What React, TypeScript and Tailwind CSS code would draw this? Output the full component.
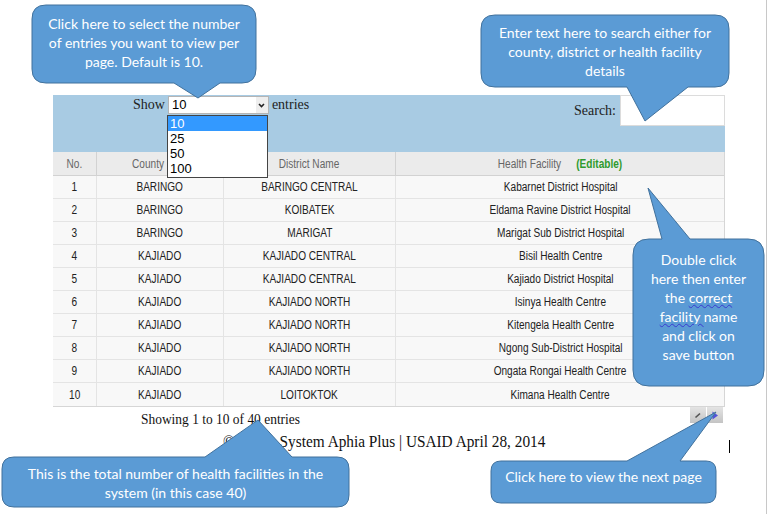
import React from "react";

type Row = { no: number; county: string; district: string; facility: string };

const rows: Row[] = [
  { no: 1, county: "BARINGO", district: "BARINGO CENTRAL", facility: "Kabarnet District Hospital" },
  { no: 2, county: "BARINGO", district: "KOIBATEK", facility: "Eldama Ravine District Hospital" },
  { no: 3, county: "BARINGO", district: "MARIGAT", facility: "Marigat Sub District Hospital" },
  { no: 4, county: "KAJIADO", district: "KAJIADO CENTRAL", facility: "Bisil Health Centre" },
  { no: 5, county: "KAJIADO", district: "KAJIADO CENTRAL", facility: "Kajiado District Hospital" },
  { no: 6, county: "KAJIADO", district: "KAJIADO NORTH", facility: "Isinya Health Centre" },
  { no: 7, county: "KAJIADO", district: "KAJIADO NORTH", facility: "Kitengela Health Centre" },
  { no: 8, county: "KAJIADO", district: "KAJIADO NORTH", facility: "Ngong Sub-District Hospital" },
  { no: 9, county: "KAJIADO", district: "KAJIADO NORTH", facility: "Ongata Rongai Health Centre" },
  { no: 10, county: "KAJIADO", district: "LOITOKTOK", facility: "Kimana Health Centre" },
];

type Side = "top" | "bottom";

// rounded box with a pointer on its top or bottom edge
function calloutPath(
  x: number,
  y: number,
  w: number,
  h: number,
  r: number,
  side: Side,
  a: number,
  b: number,
  tip: [number, number]
) {
  const R = x + w;
  const B = y + h;
  const top =
    side === "top"
      ? `L ${a} ${y} L ${tip[0]} ${tip[1]} L ${b} ${y} L ${R - r} ${y}`
      : `L ${R - r} ${y}`;
  const bottom =
    side === "bottom"
      ? `L ${b} ${B} L ${tip[0]} ${tip[1]} L ${a} ${B} L ${x + r} ${B}`
      : `L ${x + r} ${B}`;
  return `M ${x + r} ${y} ${top} Q ${R} ${y} ${R} ${y + r} L ${R} ${B - r} Q ${R} ${B} ${R - r} ${B} ${bottom} Q ${x} ${B} ${x} ${B - r} L ${x} ${y + r} Q ${x} ${y} ${x + r} ${y} Z`;
}

const callouts = [
  { box: [32, 5, 224, 78], r: 14, side: "bottom" as Side, a: 174, b: 220, tip: [198, 98] as [number, number] },
  { box: [481, 15, 248, 72], r: 14, side: "bottom" as Side, a: 627, b: 688, tip: [645, 121] as [number, number] },
  { box: [633, 239, 131, 147], r: 16, side: "top" as Side, a: 662, b: 690, tip: [648, 188] as [number, number] },
  { box: [2, 457, 347, 50], r: 12, side: "top" as Side, a: 205, b: 292, tip: [258, 420] as [number, number] },
  { box: [491, 461, 225, 42], r: 10, side: "top" as Side, a: 627, b: 680, tip: [716, 412] as [number, number] },
];

const calloutFont = { fontFamily: "Lato, 'Open Sans', sans-serif" };
const tableFont = { fontFamily: "'Liberation Sans', Arial, sans-serif" };
const serifFont = { fontFamily: "'Liberation Serif', 'Times New Roman', serif" };

function CalloutText({ box, children }: { box: number[]; children: React.ReactNode }) {
  return (
    <div
      className="absolute flex items-center justify-center text-center text-white text-[14px] leading-[19px]"
      style={{ left: box[0], top: box[1], width: box[2], height: box[3], ...calloutFont }}
    >
      <div>{children}</div>
    </div>
  );
}

// the screenshot's table text is horizontally squeezed
function Narrow({ children }: { children: React.ReactNode }) {
  return <span className="inline-block whitespace-nowrap scale-x-[0.84]">{children}</span>;
}

export default function App() {
  return (
    <div className="relative w-[767px] h-[514px] overflow-hidden bg-white border-r border-[#c8c8c8]">
      <div className="pt-[95px] pl-[53px]">
        <div className="w-[672px]">
          {/* toolbar */}
          <div className="relative flex justify-between h-[57px] bg-[#a8cbe3]">
            <div className="flex items-start gap-[3px] pl-[80px] pt-[1px] text-[14px] text-[#222]" style={serifFont}>
              <span className="leading-[18px]">Show</span>
              <div className="flex w-[101px] h-[18px] bg-white border border-[#b5b5b5]">
                <span className="flex-1 pl-[3px] text-[13px] leading-[16px] text-black" style={tableFont}>10</span>
                <span className="flex w-[12px] items-center justify-center bg-[#eeeeee]">
                  <svg width="7" height="5" viewBox="0 0 7 5">
                    <path d="M1 1 L3.5 3.5 L6 1" stroke="#222" strokeWidth="1.6" fill="none" />
                  </svg>
                </span>
              </div>
              <span className="leading-[18px]">entries</span>
            </div>
            <div className="flex items-start gap-[4px]">
              <span className="pt-[5px] text-[14px] text-[#222]" style={serifFont}>Search:</span>
              <div className="w-[105px] h-[31px] bg-white border border-[#dcdcdc]" />
            </div>
            {/* open dropdown list */}
            <div
              className="absolute left-[114px] top-[20px] w-[101px] h-[63px] bg-white border border-[#444] text-[13px] leading-[15px] text-black z-10"
              style={tableFont}
            >
              <div className="pl-[2px] bg-[#3399ff] text-white">10</div>
              <div className="pl-[2px]">25</div>
              <div className="pl-[2px]">50</div>
              <div className="pl-[2px]">100</div>
            </div>
          </div>

          {/* table */}
          <div className="border-r border-b border-[#d6d6d6] text-[12px]" style={tableFont}>
            <div className="grid grid-cols-[44px_127px_172px_329px] h-[24px] bg-[#ebebeb] text-[#666] border-b border-[#d2d2d2]">
              <div className="flex items-center justify-center border-r border-[#d2d2d2]"><Narrow>No.</Narrow></div>
              <div className="flex items-center justify-center pr-[24px] border-r border-[#d2d2d2]"><Narrow>County</Narrow></div>
              <div className="flex items-center justify-center border-r border-[#d2d2d2]"><Narrow>District Name</Narrow></div>
              <div className="flex items-center justify-center">
                <Narrow>
                  Health Facility
                  <span className="ml-[18px] font-bold text-[#2e9a2e]">(Editable)</span>
                </Narrow>
              </div>
            </div>
            {rows.map((r) => (
              <div
                key={r.no}
                className="grid grid-cols-[44px_127px_172px_329px] h-[23px] bg-[#f8f8f8] text-[#222] border-b border-[#e4e4e4] last:border-b-0"
              >
                <div className="flex items-center justify-center border-r border-[#e4e4e4]"><Narrow>{r.no}</Narrow></div>
                <div className="flex items-center justify-center border-r border-[#e4e4e4]"><Narrow>{r.county}</Narrow></div>
                <div className="flex items-center justify-center border-r border-[#e4e4e4]"><Narrow>{r.district}</Narrow></div>
                <div className="flex items-center justify-center"><Narrow>{r.facility}</Narrow></div>
              </div>
            ))}
          </div>

          {/* info + pagination */}
          <div className="flex justify-between h-[24px]">
            <span className="pl-[88px] pt-[4px] text-[14px] leading-[18px] text-[#111]" style={serifFont}>
              <span className="inline-block origin-left scale-x-[0.96]">Showing 1 to 10 of 40 entries</span>
            </span>
            <div className="flex gap-[1px] pr-[2px]">
              <div className="flex w-[16px] h-[16px] items-center justify-center bg-gradient-to-b from-[#e4e4e4] to-[#c4c4c4]">
                <svg width="8" height="8" viewBox="0 0 8 8">
                  <path d="M1.5 6.5 L6 2.5" stroke="#555" strokeWidth="1.6" />
                </svg>
              </div>
              <div className="flex w-[16px] h-[16px] items-center justify-center bg-gradient-to-b from-[#e4e4e4] to-[#c4c4c4]">
                <svg width="8" height="9" viewBox="0 0 8 9">
                  <path d="M1.5 0.5 L7 4.5 L1.5 8.5 Z" fill="#5353d8" />
                </svg>
              </div>
            </div>
          </div>
          <div className="flex justify-center pt-[1px] pr-[9px] text-[17px] leading-[20px] text-[#111]" style={serifFont}>
            <span className="inline-block whitespace-nowrap scale-x-[0.9]">© Mgmt System Aphia Plus | USAID April 28, 2014</span>
          </div>
        </div>
      </div>

      {/* text cursor */}
      <div className="absolute left-[729px] top-[440px] w-px h-[13px] bg-black" />

      {/* callout shapes */}
      <svg className="absolute inset-0 pointer-events-none" width="767" height="514" viewBox="0 0 767 514">
        {callouts.map((c, i) => (
          <path
            key={i}
            d={calloutPath(c.box[0], c.box[1], c.box[2], c.box[3], c.r, c.side, c.a, c.b, c.tip)}
            fill="#5b9bd5"
            stroke="#41719c"
            strokeWidth="1"
          />
        ))}
      </svg>

      <CalloutText box={[32, 3, 224, 78]}>
        Click here to select the number
        <br />
        of entries you want to view per
        <br />
        page. Default is 10.
      </CalloutText>
      <CalloutText box={[481, 15, 248, 72]}>
        Enter text here to search either for
        <br />
        county, district or health facility
        <br />
        details
      </CalloutText>
      <CalloutText box={[633, 233, 131, 147]}>
        Double click
        <br />
        here then enter
        <br />
        the <span className="underline decoration-wavy decoration-[#3a3ad0] decoration-1">correct </span>
        <br />
        <span className="underline decoration-wavy decoration-[#3a3ad0] decoration-1">facility </span>name
        <br />
        and click on
        <br />
        save button
      </CalloutText>
      <CalloutText box={[2, 458, 347, 50]}>
        This is the total number of health facilities in the
        <br />
        system (in this case 40)
      </CalloutText>
      <CalloutText box={[491, 455, 225, 42]}>Click here to view the next page</CalloutText>
    </div>
  );
}
